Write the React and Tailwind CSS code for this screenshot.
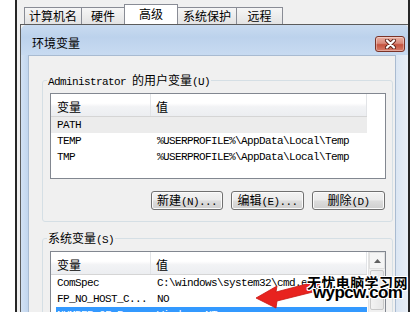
import React from "react";

function C({ children, className = "" }) {
  return (
    <span className={"font-['Noto_Sans_CJK_SC',sans-serif] text-[12px] tracking-normal " + className}>
      {children}
    </span>
  );
}

function Tab({ children, w, sel }) {
  return (
    <div
      className={
        sel
          ? "relative z-10 -ml-px h-[20px] flex items-center justify-center border-t border-x border-[#898c95] bg-white leading-[14px] pb-[1px]"
          : "-ml-px first:ml-0 h-[17px] flex items-center justify-center border-t border-x border-[#898c95] bg-[linear-gradient(to_bottom,#f6f6f6,#e3e3e3)] leading-[14px]"
      }
      style={{ width: w }}
    >
      <C>{children}</C>
    </div>
  );
}

function CloseBtn() {
  return (
    <div className="ml-auto mt-[11px] mr-[3px] w-[30px] h-[16px] rounded-[3px] border border-[#7a3328] bg-[linear-gradient(to_bottom,#e9b0a3_0%,#d9897a_45%,#c5533f_55%,#d77d6b_100%)] shadow-[inset_0_0_0_1px_rgba(255,255,255,0.35)] flex items-center justify-center">
      <svg width="13" height="10" viewBox="0 0 13 10">
        <path d="M3 1.5 L10 8.5 M10 1.5 L3 8.5" stroke="#5b1f16" strokeWidth="4" strokeLinecap="round" />
        <path d="M3 1.5 L10 8.5 M10 1.5 L3 8.5" stroke="#ffffff" strokeWidth="2.3" strokeLinecap="round" />
      </svg>
    </div>
  );
}

function Btn({ w, children }) {
  return (
    <div
      className="h-[19px] rounded-[3px] border border-[#707070] bg-[linear-gradient(to_bottom,#f3f3f3_0%,#ebebeb_48%,#dddddd_52%,#cfcfcf_100%)] shadow-[inset_0_0_0_1px_#fbfbfb] flex items-center justify-center leading-[14px]"
      style={{ width: w }}
    >
      {children}
    </div>
  );
}

function Header() {
  return (
    <div className="h-[23px] shrink-0 flex">
      <div className="w-[316px] flex border-b border-[#d5d5d5] bg-[linear-gradient(to_bottom,#ffffff_0%,#ffffff_42%,#f2f3f5_58%,#eceef1_100%)]">
        <div className="w-[100px] border-r border-[#e2e4e7] flex items-center pl-[6px] pt-[3px]">
          <C>变量</C>
        </div>
        <div className="flex-1 border-r border-[#e2e4e7] flex items-center pl-[5px] pt-[3px]">
          <C>值</C>
        </div>
      </div>
      <div className="flex-1 bg-white" />
    </div>
  );
}

function Row({ name, value, cls = "" }) {
  return (
    <div className={"h-[16px] shrink-0 flex items-center leading-[16px] whitespace-nowrap " + cls}>
      <div className="w-[100px] pl-[6px] overflow-hidden">{name}</div>
      <div className="pl-[6px]">{value}</div>
    </div>
  );
}

export default function App() {
  return (
    <div className="relative w-[419px] h-[312px] overflow-hidden bg-white flex text-black font-['Liberation_Mono','Noto_Sans_CJK_SC',monospace] text-[11px] tracking-[-0.6px]">
      <div className="w-[15px] shrink-0" />
      <div className="w-[395px] shrink-0 flex flex-col bg-[#f0f0f0] border-x-2 border-[#262626]">
        {/* tabs */}
        <div className="h-[24px] shrink-0 flex items-end pl-[7px]">
          <Tab w={58}>计算机名</Tab>
          <Tab w={44}>硬件</Tab>
          <Tab w={54} sel>
            高级
          </Tab>
          <Tab w={60}>系统保护</Tab>
          <Tab w={47}>远程</Tab>
        </div>
        {/* tab panel */}
        <div className="flex-1 min-h-0 ml-[3px] flex border-l border-t border-[#5c5c5c]">
          {/* dialog */}
          <div className="flex-1 min-w-0 flex flex-col rounded-tl-[6px] rounded-tr-[4px] bg-[#c4d7ee] overflow-hidden">
            <div className="h-[30px] shrink-0 flex items-start bg-[linear-gradient(to_bottom,#c9dbf0_0%,#bcd2ec_40%,#c8dbf1_100%)]">
              <div className="pl-[11px] pt-[10px] leading-[16px]">
                <C>环境变量</C>
              </div>
              <CloseBtn />
            </div>
            <div className="flex-1 min-h-0 flex">
              <div className="w-[7px] shrink-0 bg-[linear-gradient(to_right,#d2e1f3,#c2d6ee)]" />
              <div className="flex-1 min-w-0 bg-[#f0f0f0] border-l border-t border-r border-[#a9bbd1] flex flex-col pl-[13px] pr-[2px] overflow-hidden">
                {/* group 1 */}
                <div className="relative mt-[24px] shrink-0 border border-[#d5dfe5] rounded-[3px] pt-[12px] pl-[7px] pr-[6px] pb-[11px]">
                  <div className="absolute left-[4px] top-[-8px] px-[1px] bg-[#f0f0f0] leading-[14px] whitespace-nowrap">
                    Administrator <C>的用户变量</C>(U)
                  </div>
                  <div className="h-[86px] border border-[#828790] bg-white flex flex-col">
                    <Header />
                    <Row name="PATH" value="" cls="w-[316px] bg-[#ececec]" />
                    <Row name="TEMP" value="%USERPROFILE%\AppData\Local\Temp" />
                    <Row name="TMP" value="%USERPROFILE%\AppData\Local\Temp" />
                  </div>
                  <div className="mt-[12px] flex justify-end gap-[8px] mr-[1px]">
                    <Btn w={72}>
                      <span>
                        <C>新建</C>(N)...
                      </span>
                    </Btn>
                    <Btn w={73}>
                      <span>
                        <C>编辑</C>(E)...
                      </span>
                    </Btn>
                    <Btn w={73}>
                      <span>
                        <C>删除</C>(D)
                      </span>
                    </Btn>
                  </div>
                </div>
                {/* group 2 */}
                <div className="relative mt-[16px] shrink-0 h-[120px] border border-[#d5dfe5] rounded-[3px] pt-[12px] pl-[7px] pr-[6px]">
                  <div className="absolute left-[4px] top-[-8px] px-[1px] bg-[#f0f0f0] leading-[14px] whitespace-nowrap">
                    <C>系统变量</C>(S)
                  </div>
                  <div className="h-[100px] border border-[#828790] bg-white flex">
                    <div className="flex-1 min-w-0 flex flex-col">
                      <Header />
                      <Row name="ComSpec" value="C:\windows\system32\cmd.exe" />
                      <Row name="FP_NO_HOST_C..." value="NO" />
                      <div className="h-[16px] shrink-0 ml-[5px] w-[311px] bg-[#3399ff] text-white flex items-center leading-[16px] whitespace-nowrap">
                        <div className="w-[95px] pl-[1px]">NUMBER_OF_P...</div>
                        <div className="pl-[6px]">Windows_NT</div>
                      </div>
                    </div>
                    <div className="w-[17px] shrink-0 bg-[#f0f0f0] border-l border-[#e3e3e3] flex flex-col">
                      <div className="h-[17px] flex items-center justify-center border border-[#e0e0e0] bg-[#f5f5f5]">
                        <svg width="7" height="4" viewBox="0 0 7 4">
                          <path d="M0 4 L3.5 0 L7 4 Z" fill="#606060" />
                        </svg>
                      </div>
                      <div className="mt-[1px] h-[40px] mx-[1px] border border-[#c8c8c8] rounded-[2px] bg-[linear-gradient(to_right,#f3f3f3,#e6e6e6)]" />
                    </div>
                  </div>
                </div>
              </div>
              <div className="w-[12px] shrink-0 bg-[linear-gradient(to_right,#dbe6f3,#e8eef6)]" />
            </div>
          </div>
        </div>
      </div>

      {/* red arrow */}
      <svg className="absolute left-0 top-0" width="419" height="312" viewBox="0 0 419 312">
        <polygon
          points="256,298 277,286 276,292 318,281 321,290 277,301 276,308"
          fill="#e8231f"
          stroke="#c81510"
          strokeWidth="0.8"
          strokeLinejoin="round"
        />
      </svg>

      {/* watermark */}
      <div className="absolute left-[307px] top-[275px] font-['Noto_Sans_CJK_SC',sans-serif] font-bold text-[14px] leading-[14px] tracking-[0.4px] text-black whitespace-nowrap [text-shadow:1px_0_0_#fff,-1px_0_0_#fff,0_1px_0_#fff,0_-1px_0_#fff,1px_1px_0_#fff,-1px_-1px_0_#fff,1px_-1px_0_#fff,-1px_1px_0_#fff]">
        无忧电脑学习网
      </div>
      <div className="absolute left-[313px] top-[284px] font-['Liberation_Sans',sans-serif] font-bold text-[17px] leading-[17px] tracking-[-0.6px] text-black whitespace-nowrap [text-shadow:1px_0_0_#fff,-1px_0_0_#fff,0_1px_0_#fff,0_-1px_0_#fff,1px_1px_0_#fff,-1px_-1px_0_#fff,1px_-1px_0_#fff,-1px_1px_0_#fff]">
        wypcw.com
      </div>
    </div>
  );
}
